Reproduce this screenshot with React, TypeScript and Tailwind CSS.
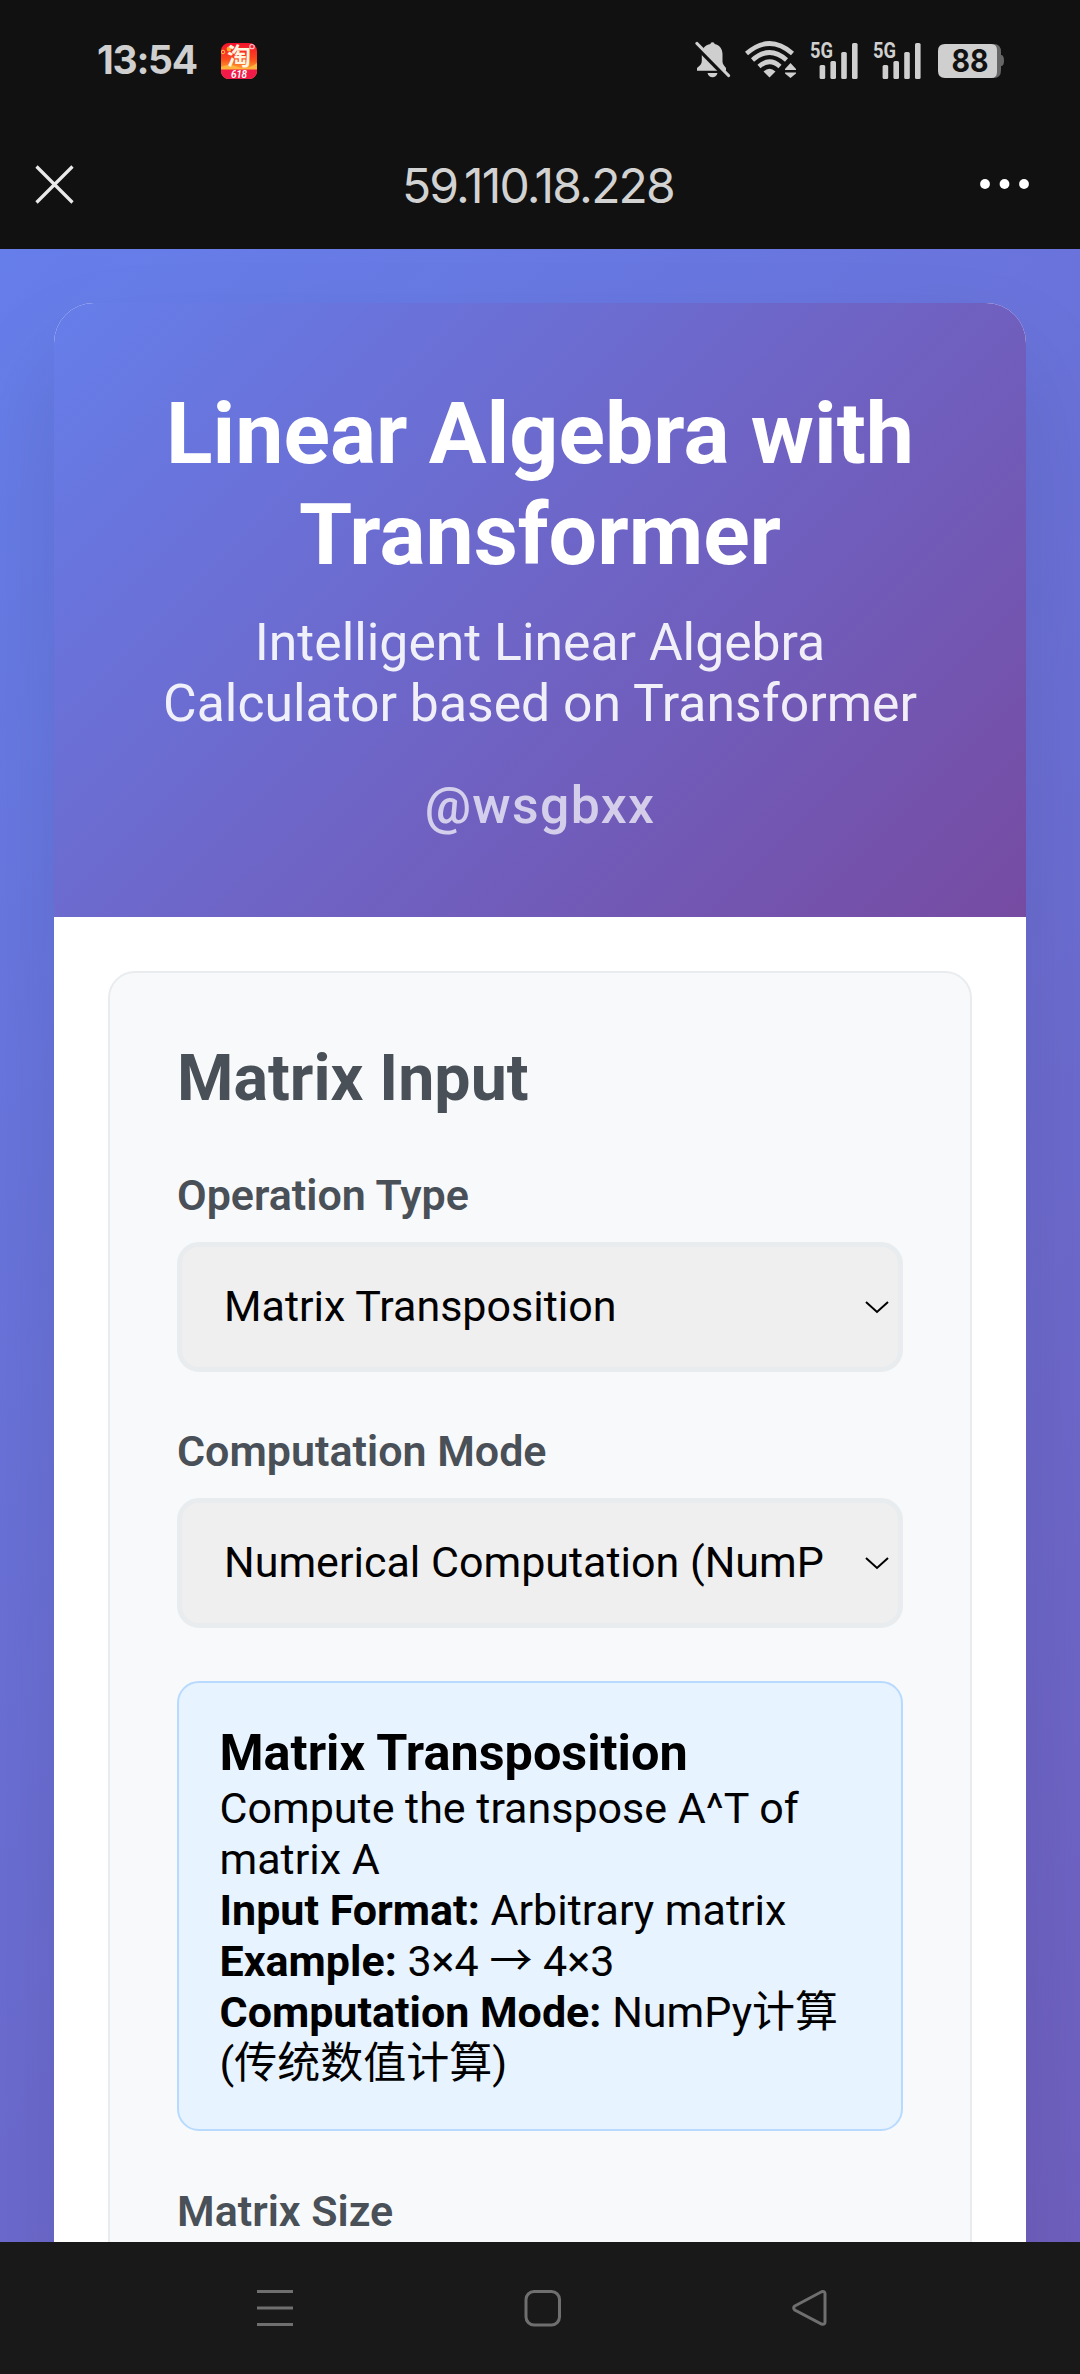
import type { ReactNode } from "react";

function SignalBars() {
  return (
    <svg className="overflow-visible" width="50" height="38" viewBox="0 0 50 38" fill="#cfcfcf">
      <text x="0" y="16.5" fontFamily="Roboto, sans-serif" fontWeight="700" fontSize="22" textLength="23" lengthAdjust="spacingAndGlyphs">5G</text>
      <rect x="9.6" y="24" width="5.6" height="14" rx="1.6" />
      <rect x="20.4" y="20" width="5.6" height="18" rx="1.6" />
      <rect x="31.2" y="11" width="5.6" height="27" rx="1.6" />
      <rect x="42" y="2" width="5.6" height="36" rx="1.6" />
    </svg>
  );
}

function StatusBar() {
  return (
    <div className="flex h-[119px] items-center pl-[97px] pr-[75px] text-[#cfcfcf]">
      <span className="font-['Inter',sans-serif] text-[39px] font-bold leading-none tracking-[-1.3px] w-[124px]">13:54</span>
      <svg className="mt-[2px] overflow-visible" width="36" height="36" viewBox="0 0 36 36">
        <defs>
          <clipPath id="shop"><rect width="36" height="36" rx="8" /></clipPath>
          <linearGradient id="shopBg" x1="0" y1="0" x2="0" y2="1">
            <stop offset="0" stopColor="#f5122c" />
            <stop offset=".45" stopColor="#fb4a1c" />
            <stop offset=".72" stopColor="#ffa030" />
          </linearGradient>
        </defs>
        <g clipPath="url(#shop)">
          <rect width="36" height="36" fill="url(#shopBg)" />
          <path d="M0 24Q9 20 17 24T36 20V28H0Z" fill="#ffb23c" />
          <path d="M0 26.5H36V36H0Z" fill="#f21a49" />
          <circle cx="8" cy="6" r="2.4" fill="#ffae2b" />
          <circle cx="2" cy="9" r="1.8" fill="none" stroke="#ffc04a" />
          <circle cx="31" cy="3.5" r="2.2" fill="none" stroke="#ffb9c4" strokeWidth="1.3" />
          <text x="6" y="22" fontFamily="'Noto Sans CJK SC', sans-serif" fontWeight="700" fontSize="24" fill="#fff6e0">淘</text>
          <text x="10" y="35" fontFamily="Roboto, sans-serif" fontStyle="italic" fontWeight="600" fontSize="10" textLength="16" fill="#fff">618</text>
        </g>
      </svg>
      <div className="ml-auto flex items-center">
        <svg className="mr-[14px]" width="36" height="37" viewBox="0 0 36 37">
          <path d="M17.5 1.2c1.5 0 2 .8 2 1.8 5.200 1.200 8 5 8 10v7.500c0 2.500 1.500 4 3.500 6.500v2.800H2v-2.800C5 24.500 6.800 23 6.800 20V13c0-5 3-9 8.700-10 0-1 .5-1.800 2-1.800zM12.500 32h10c-.8 3.200-2.700 4.200-5 4.200s-4.200-1-5-4.200z" fill="#cfcfcf" />
          <path d="M-1 3.500L33 38" stroke="#111" strokeWidth="4" />
          <path d="M2 2.500L33.500 34.500" stroke="#cfcfcf" strokeWidth="3.200" strokeLinecap="round" />
        </svg>
        <svg className="mr-[14px]" width="51" height="37" viewBox="0 0 51 37">
          <g fill="none" stroke="#cfcfcf" strokeWidth="4.600" strokeLinecap="butt">
            <path d="M1.500 12.500Q24.500-7.500 47.500 12.500" />
            <path d="M7.500 19Q24.500 4 41.500 19" />
            <path d="M14 25.500Q24.500 16 35 25.500" />
          </g>
          <path d="M18.500 30.500Q24.500 25 30.500 30.500L24.500 36.500Z" fill="#cfcfcf" />
          <path d="M40 28L45.500 22 51 28V29H40ZM40 31.500H51V32.500L45.500 37 40 32.500Z" fill="#cfcfcf" />
        </svg>
        <div className="mr-[13px]"><SignalBars /></div>
        <div className="mr-[14px]"><SignalBars /></div>
        <svg className="mt-[2px]" width="68" height="36" viewBox="0 0 68 36">
          <path d="M52 1h5q7 0 7 8v3q3 0 3 5.500t-3 5.500v4q0 8-7 8h-5z" fill="#666" />
          <path d="M8 1H54Q60 1 60 7V29Q60 35 54 35H8Q1 35 1 28V8Q1 1 8 1Z" fill="#cfcfcf" />
          <text x="14.500" y="29" fontFamily="Inter, sans-serif" fontWeight="700" fontSize="31" textLength="37" lengthAdjust="spacingAndGlyphs" fill="#111">88</text>
        </svg>
      </div>
    </div>
  );
}

function BrowserBar() {
  return (
    <div className="flex h-[130px] items-center pl-[35px] pr-[50px]">
      <svg width="39" height="39" viewBox="0 0 39 39">
        <path d="M1.500 1.500L37.500 37.500M37.500 1.500L1.500 37.500" stroke="#eaeaea" strokeWidth="3.200" />
      </svg>
      <span className="flex-1 pl-[22px] pt-[4px] text-center font-['Inter',sans-serif] text-[48px] leading-none tracking-[-1.8px] text-[#d2d2d2]">59.110.18.228</span>
      <svg width="50" height="10" viewBox="0 0 50 10" fill="#fff">
        <circle cx="5" cy="5" r="4.900" />
        <circle cx="24.500" cy="5" r="4.900" />
        <circle cx="44" cy="5" r="4.900" />
      </svg>
    </div>
  );
}

function Field({ label, value }: { label: string; value?: string }) {
  return (
    <div className="mb-[53px]">
      <div className="mb-[19px] h-[54px] text-[43px] font-semibold leading-[52px] text-[#495057]">{label}</div>
      {value && (
        <button className="flex h-[130px] w-full items-center rounded-[22px] border-[5px] border-[#e9ecef] bg-[#efefef] pl-[42px] pr-[9px] text-black">
          <span className="w-[602px] overflow-hidden whitespace-nowrap pb-[2px] text-left text-[43px] leading-[54px]">{value}</span>
          <svg className="ml-auto" width="24" height="14" viewBox="0 0 24 14" fill="none">
            <path d="M1 2L12 12L23 2" stroke="#000" strokeWidth="2" />
          </svg>
        </button>
      )}
    </div>
  );
}

function Row({ name, children }: { name?: string; children: ReactNode }) {
  return (
    <p>
      {name && <strong className="font-bold">{name}: </strong>}
      {children}
    </p>
  );
}

function NavigationBar() {
  return (
    <div className="flex h-[132px] items-center justify-between bg-[#191919] pl-[256px] pr-[252px]">
      <svg width="38" height="38" viewBox="0 0 38 38" stroke="#6f6f6f" strokeWidth="3">
        <path d="M1 2.500H37M1 19H37M1 35.500H37" />
      </svg>
      <svg width="38" height="38" viewBox="0 0 38 38" fill="none" stroke="#6f6f6f" strokeWidth="3">
        <rect x="2" y="2.500" width="33.500" height="33.500" rx="8" />
      </svg>
      <svg width="36" height="38" viewBox="0 0 36 38" fill="none" stroke="#6f6f6f" strokeWidth="3">
        <path d="M2.800 17L29.500 2.800Q33 1.800 33 5V33Q33 36 29.500 35L2.800 21Q.5 19 2.800 17Z" />
      </svg>
    </div>
  );
}

export default function App() {
  return (
    <div className="flex h-[2374px] w-[1080px] flex-col overflow-hidden bg-[#111] font-['Roboto','Noto_Sans_CJK_SC',sans-serif]">
      <StatusBar />
      <BrowserBar />
      <main className="h-[1993px] overflow-hidden">
        <div className="h-[4050px] bg-[linear-gradient(135deg,#667eea_0%,#764ba2_100%)] p-[54px]">
          <div className="h-full overflow-hidden rounded-[40px] bg-white shadow-[0_54px_108px_rgba(0,0,0,0.1)]">
            <header className="h-[614px] bg-[linear-gradient(135deg,#667eea_0%,#764ba2_100%)] px-[81px] pt-[80px] text-center text-white">
              <h1 className="text-[86px] font-bold leading-[101px]">Linear Algebra with Transformer</h1>
              <p className="mt-[27px] text-[51.7px] leading-[61px] opacity-90">Intelligent Linear Algebra Calculator based on Transformer</p>
              <p className="mt-[42px] text-[51.7px] font-medium leading-[60px] tracking-[1.35px] opacity-70">@wsgbxx</p>
            </header>
            <div className="p-[54px]">
              <section className="h-[2400px] rounded-[27px] border-2 border-[#e9ecef] bg-[#f8f9fa] px-[67px] pt-[67px]">
                <h2 className="mb-[53px] text-[64.5px] font-bold leading-[76px] text-[#495057]">Matrix Input</h2>
                <Field label="Operation Type" value="Matrix Transposition" />
                <Field label="Computation Mode" value="Numerical Computation (NumP" />
                <div className="mb-[54px] h-[450px] rounded-[22px] border-2 border-[#b8daff] bg-[#e7f3ff] px-[40.500px] pt-[40px] text-[43px] leading-[51px] text-black">
                  <h3 className="text-[50.4px] font-bold leading-[60px]">Matrix Transposition</h3>
                  <Row>Compute the transpose A^T of matrix A</Row>
                  <Row name="Input Format">Arbitrary matrix</Row>
                  <Row name="Example">3×4 → 4×3</Row>
                  <Row name="Computation Mode">NumPy计算(传统数值计算)</Row>
                </div>
                <Field label="Matrix Size" />
              </section>
            </div>
          </div>
        </div>
      </main>
      <NavigationBar />
    </div>
  );
}
